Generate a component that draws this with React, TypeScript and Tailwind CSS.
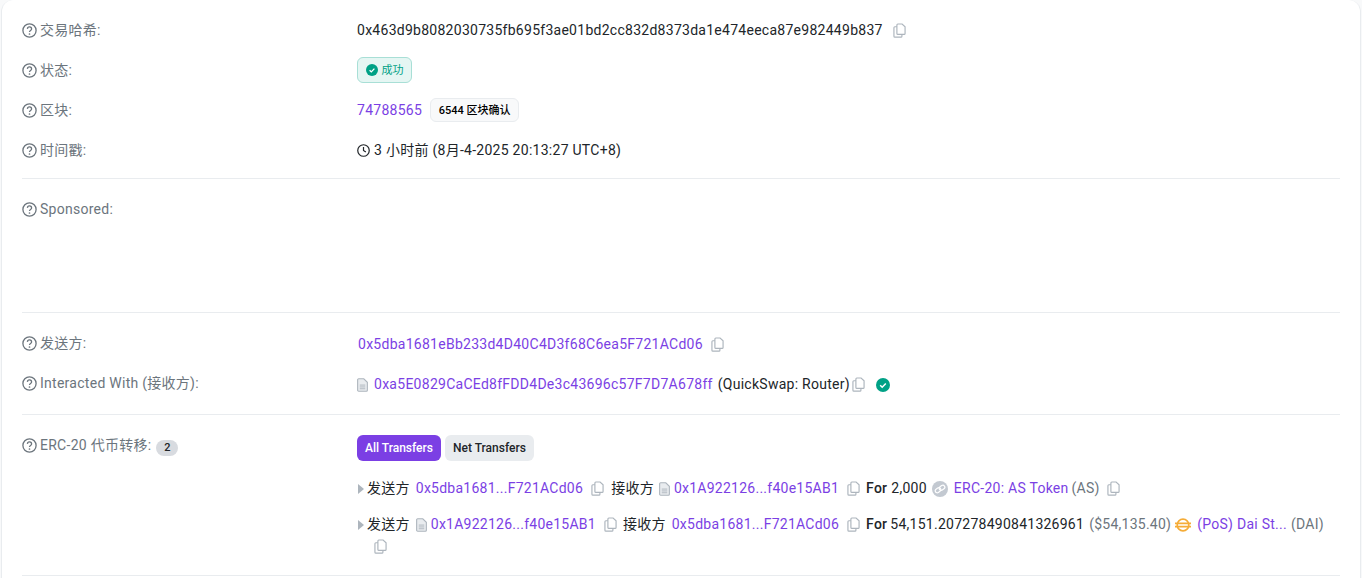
const Copy = ({ className = "" }: { className?: string }) => (
  <svg viewBox="0 0 14 16" className={`w-[13px] h-[15px] mr-px shrink-0 ${className}`} fill="none" stroke="#adb5bd" strokeWidth="1.25">
    <path d="M5.2 1h4.6L13 4v7.2a1 1 0 0 1-1 1H5.2a1 1 0 0 1-1-1V2a1 1 0 0 1 1-1z" />
    <path d="M4.2 4H2a1 1 0 0 0-1 1v9.2a1 1 0 0 0 1 1h6.6a1 1 0 0 0 1-1v-2" />
  </svg>
);
const Help = () => (
  <svg viewBox="0 0 15 15" className="w-[15px] h-[15px] shrink-0" fill="none">
    <circle cx="7.5" cy="7.5" r="6.6" stroke="#6c757d" strokeWidth="1.3" />
    <path d="M5.4 5.9a2.1 2.1 0 0 1 4.2.2c0 1.4-2.1 1.5-2.1 2.8" stroke="#6c757d" strokeWidth="1.3" />
    <circle cx="7.5" cy="11" r=".85" fill="#6c757d" />
  </svg>
);
const Check = ({ size = "w-[12px] h-[12px]" }: { size?: string }) => (
  <svg viewBox="0 0 14 14" className={`${size} shrink-0`}>
    <circle cx="7" cy="7" r="7" fill="#00a186" />
    <path d="M4.2 7.2l2 2 3.6-3.8" fill="none" stroke="#fff" strokeWidth="1.5" />
  </svg>
);
const Doc = () => (
  <svg viewBox="0 0 12 15" className="w-[11px] h-[14px] shrink-0" fill="none">
    <path d="M1.8.7h5.6l3.9 3.9v8.6a1.1 1.1 0 0 1-1.1 1.1H1.8a1.1 1.1 0 0 1-1.1-1.1V1.8A1.1 1.1 0 0 1 1.8.7z" fill="#e9ecef" stroke="#adb5bd" strokeWidth="1.2" />
    <path d="M3 7.6h6M3 9.6h6M3 11.6h6" stroke="#adb5bd" strokeWidth="1" />
  </svg>
);
const Caret = () => (
  <svg viewBox="0 0 6 10" className="w-[6px] h-[10px] shrink-0 ml-px">
    <path d="M0 0l6 5-6 5z" fill="#adb5bd" />
  </svg>
);
const Label = ({ children }: { children: React.ReactNode }) => (
  <div className="flex items-center gap-[3px] w-[335px] shrink-0 text-[#6c757d]">
    <Help />
    <span>{children}</span>
  </div>
);
const A = ({ children }: { children: React.ReactNode }) => <a className="text-[#7b3fe4]">{children}</a>;
const Row = ({ label, children }: { label: React.ReactNode; children?: React.ReactNode }) => (
  <div className="flex items-center h-10">
    <Label>{label}</Label>
    <div className="flex items-center">{children}</div>
  </div>
);
const Hr = () => <div className="h-px bg-[#e9ecef]" />;

export default function App() {
  return (
    <div className="h-[578px] overflow-hidden bg-[#f8f9fa] px-px text-[14px] leading-[21px] tracking-[0.27px] text-[#212529] font-['Roboto','Noto_Sans_CJK_SC',sans-serif]">
      <div className="h-[590px] bg-white rounded-t-xl border-x border-[#e9ecef] px-[20px] pt-[10px]">
        <div>
          <Row label="交易哈希:">
            <span>0x463d9b8082030735fb695f3ae01bd2cc832d8373da1e474eeca87e982449b837</span>
            <Copy className="ml-[10px]" />
          </Row>
          <Row label="状态:">
            <span className="flex items-center gap-1 h-[26px] w-[55px] justify-center rounded-md border border-[#a8dfd6] bg-[#e5f6f3] text-[#00a186] text-[11px] tracking-normal">
              <Check />
              成功
            </span>
          </Row>
          <Row label="区块:">
            <A>74788565</A>
            <span className="ml-2 flex items-center justify-center h-[24px] w-[89px] rounded-md border border-[#e9ecef] bg-[#f8f9fa] text-[11px] font-medium text-black tracking-normal">6544 区块确认</span>
          </Row>
          <Row label="时间戳:">
            <svg viewBox="0 0 14 14" className="w-[13px] h-[13px] mr-1 shrink-0" fill="none" stroke="#212529" strokeWidth="1.3">
              <circle cx="7" cy="7" r="6.2" />
              <path d="M7 3.2V7l2.5 1.7" />
            </svg>
            <span>3 小时前 (8月-4-2025 20:13:27 UTC+8)</span>
          </Row>
        </div>
        <div className="mt-2"><Hr /></div>
        <div className="h-[133px] pt-5">
          <Label>Sponsored:</Label>
        </div>
        <Hr />
        <div className="pt-[10px]">
          <Row label="发送方:">
            <span className="ml-px mt-[2px] flex items-center">
              <A>0x5dba1681eBb233d4D40C4D3f68C6ea5F721ACd06</A>
              <Copy className="ml-2" />
            </span>
          </Row>
          <Row label="Interacted With (接收方):">
            <span className="mt-[3px] flex items-center">
              <Doc />
              <span className="ml-[6px]"><A>0xa5E0829CaCEd8fFDD4De3c43696c57F7D7A678ff</A></span>
              <span className="ml-[5px]">(QuickSwap: Router)</span>
              <Copy className="ml-[2px]" />
              <span className="ml-[10px]"><Check size="w-[14px] h-[14px]" /></span>
            </span>
          </Row>
        </div>
        <div className="mt-[11px]"><Hr /></div>
        <div className="flex pt-5">
          <div className="w-[335px] shrink-0 flex items-start text-[#6c757d]">
            <div className="flex items-center gap-[3px]">
              <Help />
              <span>ERC-20 代币转移:</span>
              <span className="ml-[2px] mt-[4px] flex items-center justify-center w-[22px] h-4 rounded-full bg-[#d8dbe0] text-[#212529] text-[11px] font-medium">2</span>
            </div>
          </div>
          <div className="flex-1">
            <div className="flex gap-1 text-[12px] font-medium tracking-normal">
              <span className="flex items-center h-[26px] px-2 rounded-md bg-[#7b3fe4] text-white">All Transfers</span>
              <span className="flex items-center h-[26px] px-2 rounded-md bg-[#e9ecef] text-[#212529]">Net Transfers</span>
            </div>
            <div className="mt-[17px] flex items-center h-[21px] tracking-[0.255px]">
              <Caret />
              <span className="ml-[3px]">发送方</span>
              <span className="ml-[6px]"><A>0x5dba1681...F721ACd06</A></span>
              <Copy className="ml-2" />
              <span className="ml-[6px]">接收方</span>
              <span className="ml-[5px]"><Doc /></span>
              <span className="ml-1"><A>0x1A922126...f40e15AB1</A></span>
              <Copy className="ml-2" />
              <span className="ml-[5px] font-medium">For</span>
              <span className="ml-1">2,000</span>
              <svg viewBox="0 0 16 16" className="w-4 h-4 ml-[5px] shrink-0" fill="none">
                <circle cx="8" cy="8" r="8" fill="#c3c9d1" />
                <rect x="3" y="7.2" width="6" height="4" rx="2" transform="rotate(-35 6 9.2)" stroke="#fff" strokeWidth="1.2" />
                <rect x="7" y="4.8" width="6" height="4" rx="2" transform="rotate(-35 10 6.8)" stroke="#fff" strokeWidth="1.2" />
              </svg>
              <span className="ml-[6px]"><A>ERC-20: AS Token</A></span>
              <span className="ml-[3px] text-[#6c757d]">(AS)</span>
              <Copy className="ml-[7px]" />
            </div>
            <div className="mt-[15px] flex items-center h-[21px] whitespace-nowrap tracking-[0.255px]">
              <Caret />
              <span className="ml-[3px]">发送方</span>
              <span className="ml-[6px]"><Doc /></span>
              <span className="ml-1"><A>0x1A922126...f40e15AB1</A></span>
              <Copy className="ml-2" />
              <span className="ml-[5px]">接收方</span>
              <span className="ml-[6px]"><A>0x5dba1681...F721ACd06</A></span>
              <Copy className="ml-2" />
              <span className="ml-[5px] font-medium">For</span>
              <span className="ml-[3px]">54,151.207278490841326961</span>
              <span className="ml-[5px] text-[#6c757d]">($54,135.40)</span>
              <svg viewBox="0 0 16 16" className="w-4 h-4 ml-1 shrink-0" fill="none" stroke="#f5ac37" strokeWidth="1.7">
                <circle cx="8" cy="8" r="5.8" />
                <path d="M0 6.3h16M0 9.7h16" />
              </svg>
              <span className="ml-[6px]"><A>(PoS) Dai St...</A></span>
              <span className="ml-1 text-[#6c757d]">(DAI)</span>
            </div>
            <div className="ml-[17px] mt-px h-[21px] flex items-center"><Copy /></div>
          </div>
        </div>
        <div className="mt-[18px]"><Hr /></div>
      </div>
    </div>
  );
}
